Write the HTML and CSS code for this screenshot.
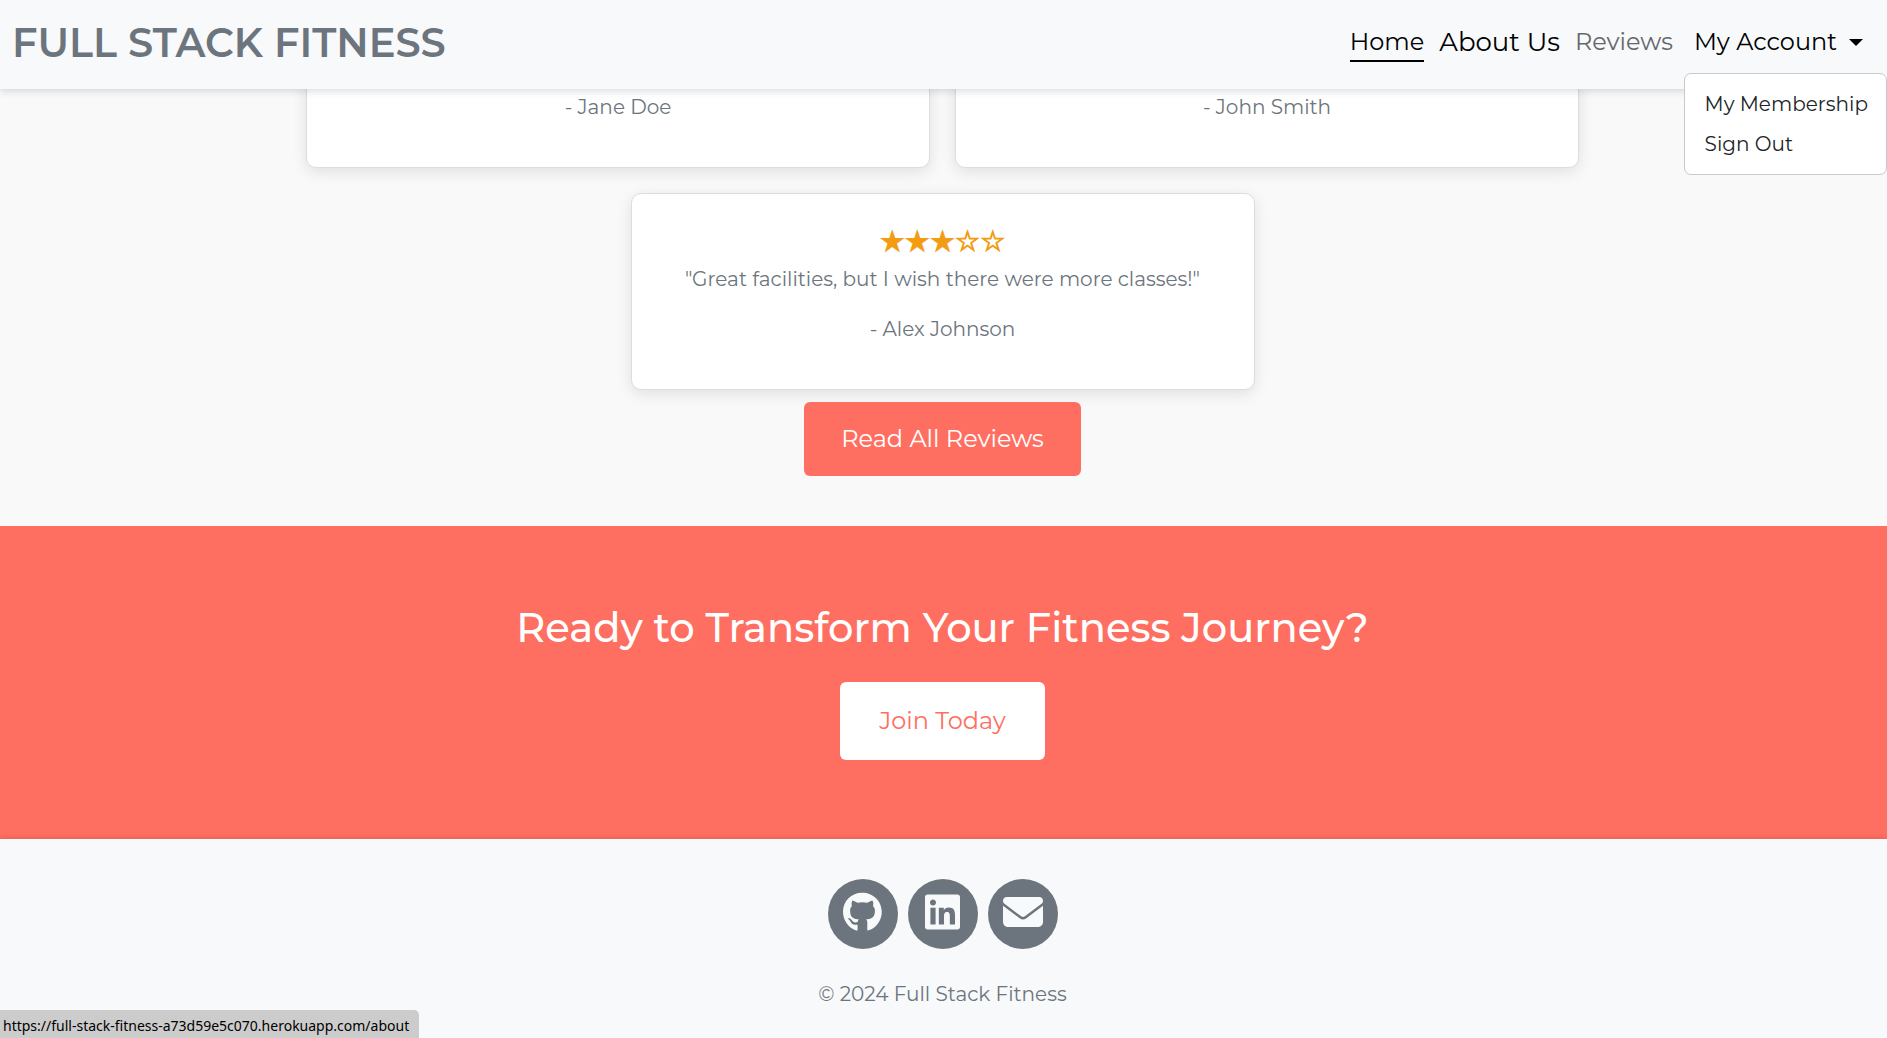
FILE: index.html
```html
<!DOCTYPE html>
<html lang="en">
<head>
<meta charset="utf-8">
<meta name="viewport" content="width=device-width, initial-scale=1">
<title>Full Stack Fitness</title>
<link rel="stylesheet" href="styles.css">
</head>
<body>
<header class="navbar">
  <a class="brand" href="#">FULL STACK FITNESS</a>
  <nav class="nav" aria-label="Main">
    <a class="nav-link active" href="#">Home</a>
    <a class="nav-link hovered" href="#about">About Us</a>
    <a class="nav-link muted" href="#reviews">Reviews</a>
    <div class="dropdown">
      <button class="nav-link toggle" type="button" aria-expanded="true">My Account</button>
      <div class="dropdown-menu">
        <a class="dropdown-item" href="#membership">My Membership</a>
        <a class="dropdown-item" href="#signout">Sign Out</a>
      </div>
    </div>
  </nav>
</header>
<main>
  <section class="reviews" id="reviews">
    <div class="cards">
      <article class="card"><p class="author">- Jane Doe</p></article>
      <article class="card"><p class="author">- John Smith</p></article>
      <article class="card">
        <div class="stars">★★★☆☆</div>
        <p class="quote">"Great facilities, but I wish there were more classes!"</p>
        <p class="author">- Alex Johnson</p>
      </article>
    </div>
    <a class="btn btn-coral" href="#all-reviews">Read All Reviews</a>
  </section>
  <section class="cta">
    <h2 class="cta-title">Ready to Transform Your Fitness Journey?</h2>
    <a class="btn btn-white" href="#join">Join Today</a>
  </section>
</main>
<footer class="footer">
  <div class="social">
    <a class="social-link" href="#github" aria-label="GitHub"><svg class="icon" viewBox="0 0 496 512"><path d="M244.8 8C106.1 8 0 113.3 0 252c0 110.9 69.8 205.8 169.5 239.2 12.8 2.3 17.3-5.6 17.3-12.1 0-6.2-.3-40.4-.3-61.4 0 0-70 15-84.7-29.8 0 0-11.4-29.1-27.8-36.6 0 0-22.9-15.7 1.6-15.4 0 0 24.9 2 38.6 25.8 21.9 38.6 58.6 27.5 72.9 20.9 2.3-16 8.8-27.1 16-33.7-55.9-6.2-112.3-14.3-112.3-110.5 0-27.5 7.6-41.3 23.6-58.9-2.6-6.5-11.1-33.3 2.6-67.9 20.9-6.5 69 27 69 27 20-5.6 41.5-8.5 62.8-8.5s42.8 2.9 62.8 8.5c0 0 48.1-33.6 69-27 13.7 34.7 5.2 61.4 2.6 67.9 16 17.7 25.8 31.5 25.8 58.9 0 96.5-58.9 104.2-114.8 110.5 9.2 7.9 17 22.9 17 46.4 0 33.7-.3 75.4-.3 83.6 0 6.5 4.6 14.4 17.3 12.1C428.2 457.8 496 362.9 496 252 496 113.3 383.5 8 244.8 8z"/></svg></a>
    <a class="social-link" href="#linkedin" aria-label="LinkedIn"><svg class="icon" viewBox="0 0 448 512"><path d="M416 32H31.9C14.3 32 0 46.5 0 64.3v383.4C0 465.5 14.3 480 31.9 480H416c17.6 0 32-14.5 32-32.3V64.3c0-17.8-14.4-32.3-32-32.3zM135.4 416H69V202.2h66.5V416zm-33.2-243c-21.3 0-38.5-17.3-38.5-38.5S80.9 96 102.2 96c21.2 0 38.5 17.3 38.5 38.5 0 21.3-17.2 38.5-38.5 38.5zm282.1 243h-66.4V312c0-24.8-.5-56.7-34.5-56.7-34.6 0-39.9 27-39.9 54.9V416h-66.4V202.2h63.7v29.2h.9c8.9-16.8 30.6-34.5 62.9-34.5 67.2 0 79.7 44.3 79.7 101.9V416z"/></svg></a>
    <a class="social-link" href="#email" aria-label="Email"><svg class="icon" viewBox="0 0 512 512"><path d="M48 64C21.5 64 0 85.5 0 112c0 15.1 7.1 29.3 19.2 38.4L236.8 313.6c11.4 8.5 27 8.5 38.4 0L492.8 150.4c12.1-9.1 19.2-23.3 19.2-38.4c0-26.5-21.5-48-48-48H48zM0 176V384c0 35.3 28.7 64 64 64H448c35.3 0 64-28.7 64-64V176L294.4 339.2c-22.8 17.1-54 17.1-76.8 0L0 176z"/></svg></a>
  </div>
  <p class="copyright">© 2024 Full Stack Fitness</p>
</footer>
<div class="status">https://full-stack-fitness-a73d59e5c070.herokuapp.com/about</div>
</body>
</html>
```

FILE: styles.css
```css
* { box-sizing: border-box; }
body {
  margin: 0;
  min-height: 100vh;
  display: flex;
  flex-direction: column;
  background: #f8f9fb;
  color: #6c757d;
  font-family: Montserrat, Inter, sans-serif;
  font-size: 20px;
  line-height: 30px;
}
a { color: inherit; text-decoration: none; }
p, h2 { margin: 0; }

.navbar {
  position: sticky;
  top: 0;
  z-index: 10;
  height: 89px;
  flex: none;
  display: flex;
  align-items: center;
  justify-content: space-between;
  padding: 0 24px 4px 12px;
  background: #f8f9fb;
  box-shadow: 0 2px 8px rgba(0, 0, 0, .15);
}
.brand { font-size: 40px; line-height: 58px; font-weight: 600; }
.nav { display: flex; align-items: center; gap: 15px; }
.nav-link {
  border: 0;
  border-bottom: 2px solid transparent;
  padding: 3px 0 2px;
  background: none;
  color: #000;
  font: inherit;
  font-size: 24px;
  line-height: 32px;
}
.nav-link.active { border-bottom-color: #000; }
.nav-link.hovered { font-size: 26px; }
.nav-link.muted { color: #65676a; }
.dropdown { position: relative; margin-left: 6px; }
.toggle { display: flex; align-items: center; gap: 12px; }
.toggle::after {
  content: "";
  border: 7px solid transparent;
  border-top-color: #000;
  border-bottom: 0;
}
.dropdown-menu {
  position: absolute;
  top: 50px;
  right: -24px;
  padding: 10px 0;
  border: 1px solid #c8c9ca;
  border-radius: 7px;
  background: #fff;
}
.dropdown-item {
  display: block;
  padding: 5px 18px 5px 20px;
  color: #212529;
  white-space: nowrap;
}

.reviews {
  display: flex;
  flex-direction: column;
  align-items: center;
  padding: 0 2px 50px 0;
  background: #f9f9f9;
}
.cards {
  width: 100%;
  max-width: 1300px;
  margin: -23px 0 12px;
  display: flex;
  flex-wrap: wrap;
  justify-content: center;
  gap: 25px;
}
.card {
  flex: 0 1 624px;
  padding: 25px;
  border: 1px solid #ddd;
  border-radius: 10px;
  background: #fff;
  box-shadow: 0 4px 15px rgba(0, 0, 0, .1);
  text-align: center;
}
.author { margin-bottom: 20px; }
.quote { margin-bottom: 20px; }
.stars {
  color: #f39c12;
  font-family: "DejaVu Sans", sans-serif;
  font-size: 28px;
  line-height: 45px;
  -webkit-text-stroke: 1px #f39c12;
}
.btn {
  padding: 18px 37px;
  border-radius: 6px;
  font-size: 24px;
  line-height: 38px;
}
.btn-coral { background: #ff6f61; color: #fff; }
.btn-white { padding: 20px 39px; background: #fff; color: #ff6f61; }

.cta {
  display: flex;
  flex-direction: column;
  align-items: center;
  gap: 30px;
  padding: 78px 22px 79px 20px;
  background: #ff6f61;
  color: #fff;
}
.cta-title { font-size: 40px; line-height: 48px; font-weight: 500; text-align: center; }

.footer {
  flex: 1;
  display: flex;
  flex-direction: column;
  align-items: center;
  gap: 30px;
  padding: 40px 22px 28px 20px;
  background: #f8f9fb;
  box-shadow: 0 -2px 5px rgba(0, 0, 0, .1);
}
.social { display: flex; gap: 10px; }
.social-link {
  width: 70px;
  height: 70px;
  display: flex;
  align-items: center;
  justify-content: center;
  padding-bottom: 4px;
  border-radius: 50%;
  background: #6c757d;
  color: #f8f9fb;
}
.icon { height: 40px; fill: currentColor; }

.status {
  position: fixed;
  left: 0;
  bottom: 0;
  padding: 5px 10px 1px 3px;
  border-radius: 0 5px 0 0;
  background: #ccc;
  color: #000;
  font-family: "Noto Sans", sans-serif;
  font-size: 14px;
  line-height: 22px;
}
```
